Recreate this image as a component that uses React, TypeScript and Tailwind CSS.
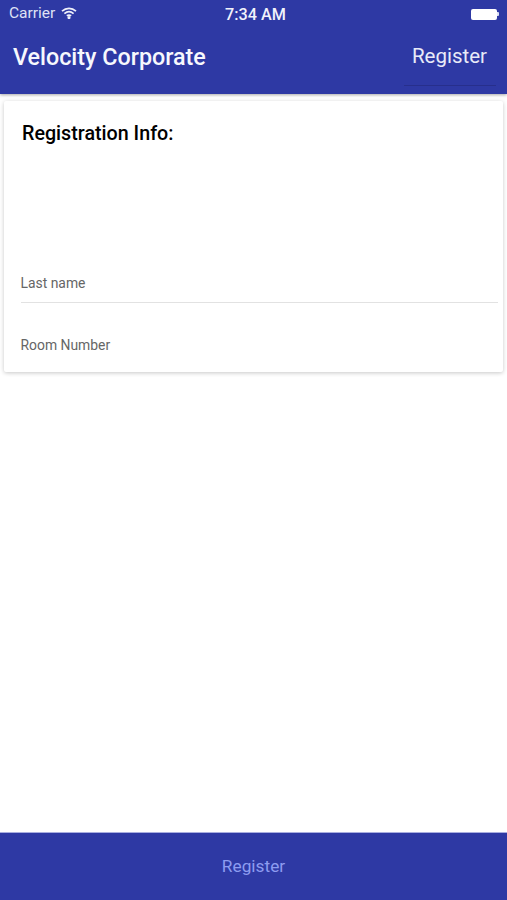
export default function App(): React.JSX.Element {
  return (
    <div className="flex h-[900px] w-[507px] flex-col overflow-hidden bg-white font-['Roboto',sans-serif]">
      {/* header with the ios status bar on top */}
      <header className="z-10 h-[94px] shrink-0 bg-[#2e39a4] shadow-[0_1px_3px_rgba(0,0,0,0.35)]">
        <div className="relative flex h-[28px] items-center justify-between pl-[9px] pr-[8px] text-[15.5px] text-[#dfe2f5]">
          <div className="flex items-center gap-[6px]">
            <span>Carrier</span>
            <svg width="16" height="12" viewBox="0 0 16 12" className="mb-[3px]" fill="none" stroke="#eef0fa" strokeWidth="1.7">
              <path d="M1 4.2C5.2.4 10.8.4 15 4.2" />
              <path d="M3.4 6.6c2.8-2.4 6.4-2.4 9.2 0" />
              <path d="M5.8 8.8c1.4-1 3-1 4.4 0" />
              <circle cx="8" cy="10.6" r="0.7" fill="#eef0fa" />
            </svg>
          </div>
          <span className="absolute left-[225px] top-[3px] text-[16.2px] font-medium text-[#f1f2fb]">7:34 AM</span>
          <div className="flex items-center">
            <div className="h-[11px] w-[26px] rounded-[2px] bg-white" />
            <div className="h-[4px] w-[2px] rounded-r-[1px] bg-[#dfe2f5]" />
          </div>
        </div>
        <div className="flex h-[58px] items-start justify-between pl-[13px] pr-[11px]">
          <h1 className="mt-[13px] text-[23.3px] leading-[32px] font-medium text-[#f7f8fd]">Velocity Corporate</h1>
          <button className="flex h-[58px] w-[92px] justify-center border-b border-[#272f8c] pt-[12px] pr-[1px] text-[20.5px] leading-[32px] text-[#e8eaf8]">
            Register
          </button>
        </div>
      </header>

      <main className="flex-1 px-[4px] pt-[7px]">
        <section className="h-[271px] rounded-[2px] bg-white shadow-[0_1px_4px_rgba(0,0,0,0.22)]">
          <h2 className="pt-[20px] pl-[18px] text-[19.7px] leading-[26px] font-medium text-black">Registration Info:</h2>
          <div className="mt-[126px] ml-[16.5px] mr-[5px] h-[30px] border-b border-[#e2e2e2] text-[13.9px] leading-[20px] text-[#666666]">
            Last name
          </div>
          <div className="mt-[32px] ml-[16.5px] text-[13.9px] leading-[20px] text-[#666666]">Room Number</div>
        </section>
      </main>

      <footer className="flex h-[68px] shrink-0 items-center justify-center border-t border-[#a9aee0] bg-[#2e39a4] text-[17.3px] text-[#8d9cf0]">
        Register
      </footer>
    </div>
  );
}
